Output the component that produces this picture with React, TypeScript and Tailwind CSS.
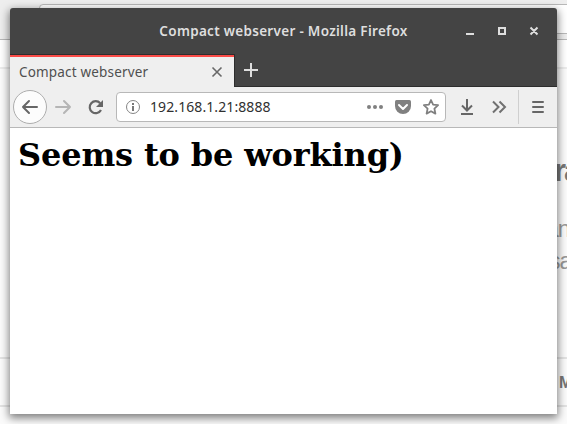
import React from "react";

function BackgroundBrowser() {
  return (
    <div className="absolute inset-0 flex flex-col overflow-hidden bg-[#fbfbfb]">
      <div className="h-10 shrink-0 border-b border-[#b8b8b8] bg-[#eeeeee] pt-1 pl-[39px]">
        <div className="h-[30px] w-[600px] rounded-[4px] border border-[#b9b9b9] bg-white" />
      </div>
      <div className="h-[29px] shrink-0 border-b-2 border-[#ececec] bg-white" />
      <div className="flex flex-col items-start font-['Liberation_Sans',sans-serif] whitespace-nowrap">
        <div className="mt-[81px] ml-[554px] h-[42px] text-[31px] leading-[42px] font-bold tracking-[-2px] text-[#777]">ra</div>
        <div className="mt-[21px] ml-[546px] h-8 text-[23px] leading-8 tracking-[-1px] text-[#999]">an</div>
        <div className="ml-[549px] h-8 text-[23px] leading-8 tracking-[-1px] text-[#999]">sa</div>
      </div>
      <div className="mt-[80px] flex h-[50px] w-full shrink-0 items-center border-y-2 border-[#e3e3e3] pt-px pl-[559px] font-['Liberation_Sans',sans-serif] text-[16px] font-bold text-[#777]">
        M
      </div>
    </div>
  );
}

function TitleBar() {
  return (
    <div className="relative flex h-[46px] shrink-0 items-center justify-center">
      <h2 className="font-['Noto_Sans',sans-serif] text-[13.5px] font-semibold tracking-[0.3px] text-[#dedede]">
        Compact webserver - Mozilla Firefox
      </h2>
      <svg className="absolute top-[17px] right-[17px]" width="76" height="12" viewBox="0 0 76 12" fill="none" stroke="#dedede" strokeWidth="2">
        <path d="M2 9h8M35 3h6v6h-6zM66.5 2.5l7 7M73.5 2.5l-7 7" />
      </svg>
    </div>
  );
}

function TabStrip() {
  return (
    <div className="flex h-[33px] shrink-0 items-stretch">
      <div className="flex w-[225px] items-center border-t border-r border-[#2d2d2d] bg-[#444]">
        <div className="flex h-full w-full items-center justify-between border-t-2 border-[#fb4b47] bg-[#efefef] pr-[11px] pl-[9px]">
          <span className="font-['Noto_Sans',sans-serif] text-[13.5px] tracking-[0.18px] text-[#505050]">Compact webserver</span>
          <svg width="12" height="12" viewBox="0 0 12 12" fill="none" stroke="#686868" strokeWidth="1.6">
            <path d="M1.5 1.5l9 9M10.5 1.5l-9 9" />
          </svg>
        </div>
      </div>
      <div className="flex flex-1 items-center border-b border-[#2d2d2d] pl-[9px]">
        <svg width="14" height="14" viewBox="0 0 14 14" stroke="#dedede" strokeWidth="2">
          <path d="M7 0v14M0 7h14" />
        </svg>
      </div>
    </div>
  );
}

function Toolbar() {
  return (
    <div className="flex h-[41px] shrink-0 items-center border-b border-[#b8b8b8] bg-[#efefef] pl-[3px]">
      <div className="flex size-[34px] items-center justify-center rounded-full border border-[#adadad] bg-[#fcfcfc]">
        <svg width="18" height="16" viewBox="0 0 18 16" fill="none" stroke="#666" strokeWidth="2" strokeLinecap="round" strokeLinejoin="round">
          <path d="M16 8H2M8 2L2 8l6 6" />
        </svg>
      </div>
      <svg className="ml-[7px]" width="18" height="16" viewBox="0 0 18 16" fill="none" stroke="#b5b5b5" strokeWidth="2" strokeLinecap="round" strokeLinejoin="round">
        <path d="M2 8h14M10 2l6 6-6 6" />
      </svg>
      <svg className="ml-[15px]" width="18" height="16" viewBox="0 0 18 16" fill="none">
        <path d="M13.2 4.2A6 6 0 1 0 14 11" stroke="#666" strokeWidth="2.2" />
        <path d="M16 1v7H9z" fill="#666" />
      </svg>
      <div className="ml-[11px] flex h-[30px] w-[330px] items-center rounded-[4px] border border-[#b8b8b8] bg-white pl-[8px]">
        <svg width="16" height="16" viewBox="0 0 16 16" fill="none">
          <circle cx="8" cy="8" r="6.5" stroke="#858585" />
          <path d="M8 7v5M8 4v2" stroke="#777" strokeWidth="2" />
        </svg>
        <span className="ml-[9px] w-[217px] pb-px font-['Noto_Sans',sans-serif] text-[14px] tracking-[0.09px] text-[#303030]">192.168.1.21:8888</span>
        <svg width="16" height="16" viewBox="0 0 16 16" fill="#808080">
          <circle cx="2" cy="8" r="2" /><circle cx="8" cy="8" r="2" /><circle cx="14" cy="8" r="2" />
        </svg>
        <svg className="ml-[12px]" width="16" height="16" viewBox="0 0 16 16">
          <path d="M1.5 1h13Q16 1 16 2.5V7A8 8 0 0 1 0 7V2.5Q0 1 1.5 1z" fill="#808080" />
          <path d="M4 6l4 4 4-4" fill="none" stroke="#fff" strokeWidth="2" strokeLinecap="round" strokeLinejoin="round" />
        </svg>
        <svg className="ml-[12px]" width="16" height="16" viewBox="0 0 16 16" fill="none" stroke="#808080" strokeWidth="1.8" strokeLinejoin="round">
          <path d="M8 1l2.1 4.6 5 .6-3.7 3.4 1 5L8 12.2l-4.4 2.4 1-5L.9 6.2l5-.6z" />
        </svg>
      </div>
      <svg className="ml-[13px]" width="16" height="16" viewBox="0 0 16 16" fill="none" stroke="#666" strokeWidth="2">
        <path d="M8 0v11M3 6.5l5 5 5-5M2 15h12" />
      </svg>
      <svg className="ml-[16px]" width="16" height="16" viewBox="0 0 16 16" fill="none" stroke="#707070" strokeWidth="2">
        <path d="M2 2.5L7.5 8 2 13.5M8.5 2.5L14 8l-5.5 5.5" />
      </svg>
      <div className="ml-[11px] h-[34px] w-px bg-[#cfcfcf]" />
      <svg className="ml-[11px]" width="16" height="16" viewBox="0 0 16 16" stroke="#666" strokeWidth="2" strokeLinecap="round">
        <path d="M3 3h10M3 8h10M3 13h10" />
      </svg>
    </div>
  );
}

export default function App() {
  return (
    <div className="relative h-[424px] w-[567px] overflow-hidden">
      <BackgroundBrowser />
      <div className="absolute top-2 left-[10px] flex h-[406px] w-[547px] flex-col overflow-hidden rounded-t-[3px] bg-[#444] shadow-[0_3px_9px_1px_rgba(0,0,0,0.5)]">
        <TitleBar />
        <TabStrip />
        <Toolbar />
        <main className="flex-1 bg-white px-2 pt-[9px]">
          <h1 className="font-['DejaVu_Serif',serif] text-[32px] leading-[37px] font-bold tracking-[-0.15px] text-black">Seems to be working)</h1>
        </main>
      </div>
    </div>
  );
}
